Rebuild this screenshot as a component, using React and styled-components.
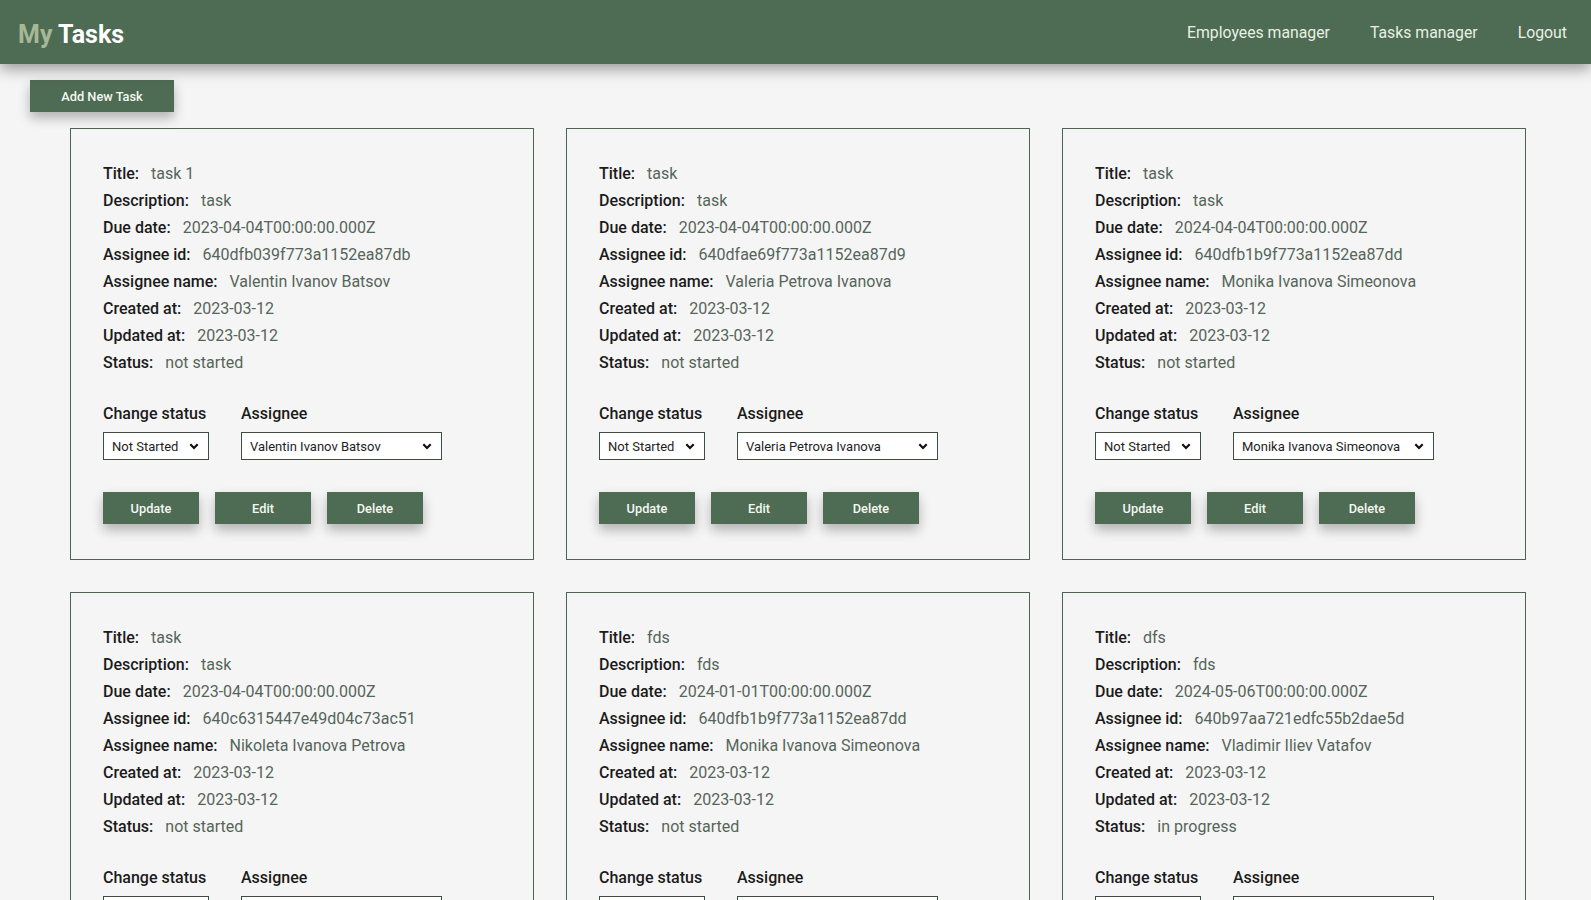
import styled, { createGlobalStyle } from "styled-components";

const GlobalStyle = createGlobalStyle`
  * { box-sizing: border-box; }
  body {
    margin: 0;
    background: #f5f5f5;
    font-family: Roboto, "Liberation Sans", Arial, sans-serif;
    color: #1b1b1b;
  }
`;

const tasks = [
  { title: "task 1", description: "task", dueDate: "2023-04-04T00:00:00.000Z", assigneeId: "640dfb039f773a1152ea87db", assigneeName: "Valentin Ivanov Batsov", createdAt: "2023-03-12", updatedAt: "2023-03-12", status: "not started" },
  { title: "task", description: "task", dueDate: "2023-04-04T00:00:00.000Z", assigneeId: "640dfae69f773a1152ea87d9", assigneeName: "Valeria Petrova Ivanova", createdAt: "2023-03-12", updatedAt: "2023-03-12", status: "not started" },
  { title: "task", description: "task", dueDate: "2024-04-04T00:00:00.000Z", assigneeId: "640dfb1b9f773a1152ea87dd", assigneeName: "Monika Ivanova Simeonova", createdAt: "2023-03-12", updatedAt: "2023-03-12", status: "not started" },
  { title: "task", description: "task", dueDate: "2023-04-04T00:00:00.000Z", assigneeId: "640c6315447e49d04c73ac51", assigneeName: "Nikoleta Ivanova Petrova", createdAt: "2023-03-12", updatedAt: "2023-03-12", status: "not started" },
  { title: "fds", description: "fds", dueDate: "2024-01-01T00:00:00.000Z", assigneeId: "640dfb1b9f773a1152ea87dd", assigneeName: "Monika Ivanova Simeonova", createdAt: "2023-03-12", updatedAt: "2023-03-12", status: "not started" },
  { title: "dfs", description: "fds", dueDate: "2024-05-06T00:00:00.000Z", assigneeId: "640b97aa721edfc55b2dae5d", assigneeName: "Vladimir Iliev Vatafov", createdAt: "2023-03-12", updatedAt: "2023-03-12", status: "in progress" },
];

const employees = [
  "Valentin Ivanov Batsov",
  "Valeria Petrova Ivanova",
  "Monika Ivanova Simeonova",
  "Nikoleta Ivanova Petrova",
  "Vladimir Iliev Vatafov",
];

const Header = styled.header`
  height: 64px;
  background: #4e6b53;
  display: flex;
  align-items: center;
  justify-content: space-between;
  padding: 0 24px 0 18px;
  box-shadow: 0 5px 14px rgba(0, 0, 0, 0.38);
  position: relative;
  z-index: 1;
`;

const Logo = styled.h1`
  margin: 4px 0 0;
  font-size: 25px;
  font-weight: 700;
  color: #ffffff;

  span {
    color: #a6b896;
  }
`;

const Nav = styled.nav`
  display: flex;
  gap: 40px;

  a {
    color: #e8f0e3;
    text-decoration: none;
    font-size: 15.8px;
  }
`;

const Button = styled.button`
  width: ${(p) => p.$width || 96}px;
  height: 32px;
  border: none;
  background: #4e6b53;
  color: #f4f8f2;
  font-family: inherit;
  font-size: 12.8px;
  font-weight: 500;
  box-shadow: 0 6px 12px rgba(0, 0, 0, 0.28);
  cursor: pointer;
`;

const Toolbar = styled.div`
  padding: 16px 0 16px 30px;
`;

const Grid = styled.div`
  display: grid;
  grid-template-columns: repeat(3, 464px);
  gap: 32px;
  padding: 0 0 40px 70px;
`;

const Card = styled.div`
  border: 1px solid #4f6353;
  padding: 31px 32px 35px;
`;

const Line = styled.p`
  margin: 0;
  font-size: 16px;
  line-height: 27px;
  font-weight: 500;
  color: #1b1b1b;

  span {
    margin-left: 12px;
    font-weight: 400;
    color: #55655a;
  }
`;

const Controls = styled.div`
  display: flex;
  gap: 32px;
  margin-top: 28px;
`;

const Field = styled.label`
  display: flex;
  flex-direction: column;
  gap: 9px;
  font-size: 16px;
  font-weight: 500;
  line-height: 19px;
`;

const SelectBox = styled.div`
  position: relative;
  width: ${(p) => p.$width}px;

  svg {
    position: absolute;
    right: 10px;
    top: 11px;
    pointer-events: none;
  }
`;

const Select = styled.select`
  appearance: none;
  width: 100%;
  height: 28px;
  border: 1px solid #3f4d42;
  border-radius: 0;
  background: #ffffff;
  padding: 0 24px 0 8px;
  font-family: Roboto, "Liberation Sans", Arial, sans-serif;
  font-size: 13px;
  color: #1e1e1e;
`;

const Actions = styled.div`
  display: flex;
  gap: 16px;
  margin-top: 32px;
`;

const Chevron = () => (
  <svg width="10" height="7" viewBox="0 0 10 7">
    <polyline points="1.3,1.3 5,5 8.7,1.3" fill="none" stroke="#111" strokeWidth="2.2" />
  </svg>
);

const TaskCard = ({ task }) => (
  <Card>
    <Line>Title:<span>{task.title}</span></Line>
    <Line>Description:<span>{task.description}</span></Line>
    <Line>Due date:<span>{task.dueDate}</span></Line>
    <Line>Assignee id:<span>{task.assigneeId}</span></Line>
    <Line>Assignee name:<span>{task.assigneeName}</span></Line>
    <Line>Created at:<span>{task.createdAt}</span></Line>
    <Line>Updated at:<span>{task.updatedAt}</span></Line>
    <Line>Status:<span>{task.status}</span></Line>
    <Controls>
      <Field>
        Change status
        <SelectBox $width={106}>
          <Select defaultValue={task.status}>
            <option value="not started">Not Started</option>
            <option value="in progress">In Progress</option>
            <option value="done">Done</option>
          </Select>
          <Chevron />
        </SelectBox>
      </Field>
      <Field>
        Assignee
        <SelectBox $width={201}>
          <Select defaultValue={task.assigneeName}>
            {employees.map((e) => (
              <option key={e} value={e}>{e}</option>
            ))}
          </Select>
          <Chevron />
        </SelectBox>
      </Field>
    </Controls>
    <Actions>
      <Button>Update</Button>
      <Button>Edit</Button>
      <Button>Delete</Button>
    </Actions>
  </Card>
);

const App = () => {
  return (
    <>
      <GlobalStyle />
      <Header>
        <Logo><span>My</span> Tasks</Logo>
        <Nav>
          <a href="#employees">Employees manager</a>
          <a href="#tasks">Tasks manager</a>
          <a href="#logout">Logout</a>
        </Nav>
      </Header>
      <Toolbar>
        <Button $width={144}>Add New Task</Button>
      </Toolbar>
      <Grid>
        {tasks.map((t, i) => (
          <TaskCard key={i} task={t} />
        ))}
      </Grid>
    </>
  );
};

export default App;
